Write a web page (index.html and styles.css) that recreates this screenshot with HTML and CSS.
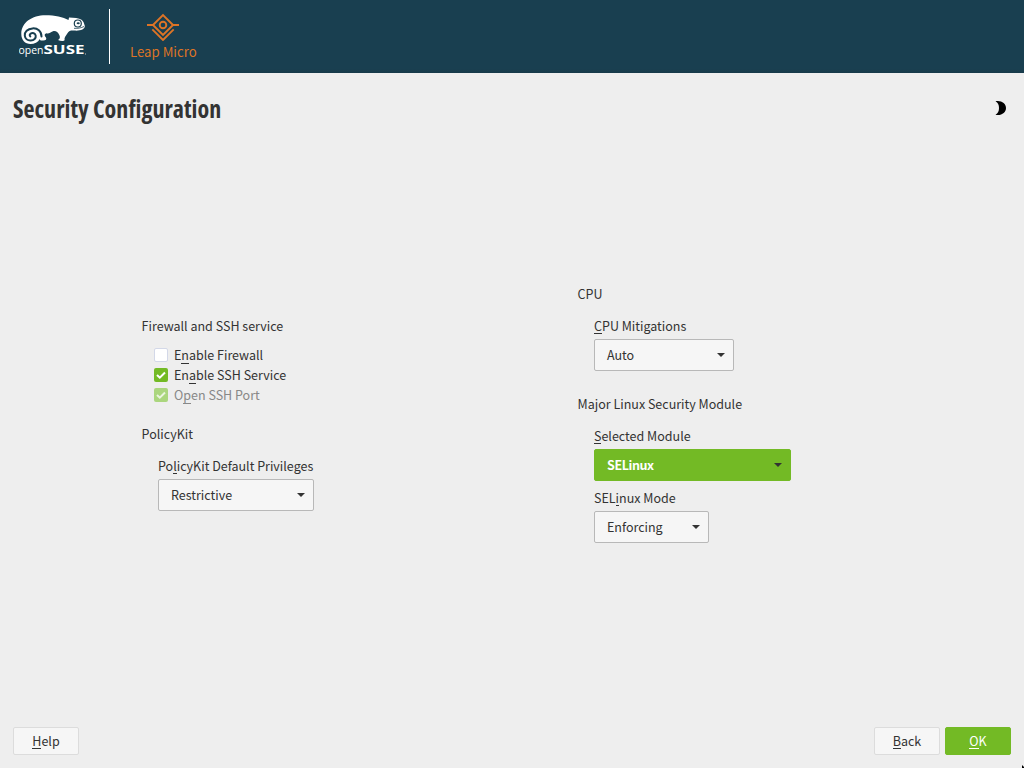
FILE: index.html
```html
<!DOCTYPE html>
<html lang="en">
<head>
<meta charset="utf-8">
<title>Security Configuration</title>
<link rel="stylesheet" href="styles.css">
</head>
<body>
<header class="banner">
  <svg class="logo" width="72" height="46" viewBox="0 0 72 46">
    <path fill="#fff" d="M11.500 32C6 32 2.300 28 2.300 22C2.300 10.500 13 3.300 26.500 3.300C36 3.300 44 5.300 49.500 8L50 5.500C55 5.500 60 6.200 62.500 7.800C64.500 9 65 11.500 65.800 14C66 17.500 61 19 55.500 18.600C52 18.400 50 18.600 48.300 21.500C46.800 24 45 25.500 45.600 28C45 29.500 41.500 29.200 39 28C40.500 27 41.500 26 40.500 23.500C39.500 20.500 37 18.500 34 19.200C31 20.600 30 22 27.500 21.300C25.500 22 25 23.300 27 25.500C28 27.500 26.500 28.800 23.500 28.500C21 28.800 21 27.600 20.800 27C19 30.500 15.500 32 11.500 32Z"/>
    <path fill="none" stroke="#193f50" stroke-width="2" stroke-linecap="round" d="M22.500 24.500C22.500 19 18.500 16 13.500 16.400C8.500 16.800 5.500 20.100 5.800 23.600C6.100 26.700 8.500 28.700 11.800 28.500C15 28.300 17.200 26.200 16.700 23.600C16.200 21.300 13.700 20.400 11.700 21.600C10.600 22.300 10.300 23.700 11.300 24.400"/>
    <path fill="none" stroke="#193f50" stroke-width=".8" d="M55 16.300C59 16.600 62 16 65 14.500"/>
    <circle cx="58.800" cy="11.500" r="3.500" fill="#fff" stroke="#193f50" stroke-width="1.200"/>
    <ellipse cx="59.200" cy="11.200" rx="1.600" ry="1" fill="#193f50"/>
    <text class="logo-open" x="-.5" y="42.300" textLength="25" lengthAdjust="spacingAndGlyphs">open</text>
    <text class="logo-suse" x="24.500" y="42.300" textLength="41" lengthAdjust="spacingAndGlyphs">SUSE</text>
    <rect x="66" y="41.500" width="1" height="1" fill="#bcc7cc"/>
  </svg>
  <div class="product">
    <svg width="32" height="28" viewBox="0 0 32 28" fill="none" stroke="#dd7426" stroke-width="1.900">
      <path d="M0 12H6L16 2L26 12H32M6 12L16 22L26 12"/>
      <path d="M5.300 16.300L16 27L26.700 16.300"/>
      <circle cx="16" cy="12" r="3.300"/>
    </svg>
    <div class="product-name"><span>Leap Micro</span></div>
  </div>
</header>
<main class="page">
  <div class="heading">
    <h1>Security Configuration</h1>
    <svg class="moon" width="12" height="16" viewBox="0 0 12 16"><path d="M.5 1.300C6.500 .3 11 3.500 11 8C11 12.700 6.500 15.900 .5 14.800C3 13.500 4 11 4 8C4 5 3 2.700 .5 1.300Z"/></svg>
  </div>
  <div class="columns">
    <section class="left">
      <div class="row">Firewall and SSH service</div>
      <div class="checks">
        <label class="check"><i class="box"></i>E<u>n</u>able Firewall</label>
        <label class="check"><i class="box on"><svg width="14" height="14"><path d="M3 7L5.800 9.700L11 4.500"/></svg></i>En<u>a</u>ble SSH Service</label>
        <label class="check disabled"><i class="box on"><svg width="14" height="14"><path d="M3 7L5.800 9.700L11 4.500"/></svg></i>O<u>p</u>en SSH Port</label>
      </div>
      <div class="row policy">PolicyKit</div>
      <div class="field">
        <div class="row">Po<u>l</u>icyKit Default Privileges</div>
        <div class="select w156">Restrictive<i class="arrow"></i></div>
      </div>
    </section>
    <section class="right">
      <div class="row">CPU</div>
      <div class="field">
        <div class="row"><u>C</u>PU Mitigations</div>
        <div class="select w140">Auto<i class="arrow"></i></div>
      </div>
      <div class="row module">Major Linux Security Module</div>
      <div class="field">
        <div class="row"><u>S</u>elected Module</div>
        <div class="select focus w197">SELinux<i class="arrow"></i></div>
        <div class="row mode">SEL<u>i</u>nux Mode</div>
        <div class="select w115">Enforcing<i class="arrow"></i></div>
      </div>
    </section>
  </div>
  <footer class="buttons">
    <div class="button"><span><u>H</u>elp</span></div>
    <div class="button back"><span><u>B</u>ack</span></div>
    <div class="button primary"><span><u>O</u>K</span></div>
  </footer>
</main>
<svg class="pointer" width="3" height="3"><path d="M1 0L3 2V3H1Z"/></svg>
</body>
</html>
```
FILE: styles.css
```css
* { box-sizing: border-box; }
body {
  margin: 0;
  width: 1024px;
  height: 768px;
  overflow: hidden;
  display: flex;
  flex-direction: column;
  background: #eee;
  color: #333;
  font: 12.500px/20px "Noto Sans CJK SC", "Noto Sans", sans-serif;
}
.banner {
  height: 73px;
  flex: none;
  display: flex;
  padding: 9px 0 0 19px;
  background: linear-gradient(#193f50 69px, #173a4a 73px);
}
.logo { display: block; margin-top: 3px; }
.logo text { fill: #fff; font-family: "Open Sans", sans-serif; }
.logo .logo-open { font-size: 11.500px; font-weight: 500; }
.logo .logo-suse { font-size: 13px; font-weight: 700; }
.product {
  height: 55px;
  margin-left: 18px;
  padding: 4px 0 0 20px;
  border-left: 1px solid #fff;
  color: #dd7426;
  display: flex;
  flex-direction: column;
  align-items: center;
}
.product-name { margin-top: 1px; font-size: 13.200px; line-height: 20px; }
.page { flex: 1; display: flex; flex-direction: column; padding: 0 13px 13px; }
.heading {
  display: flex;
  justify-content: space-between;
  padding: 19px 4px 0 0;
  height: 54px;
}
h1 {
  margin: 0;
  font: 700 24px/34px "Open Sans", sans-serif;
  font-stretch: 75%;
  letter-spacing: .02px;
  white-space: nowrap;
}
.moon { margin-top: 8px; }
.columns { flex: 1; display: flex; padding: 157px 0 0 128.600px; }
.left { width: 436px; padding-top: 32px; }
.row { height: 20px; white-space: nowrap; }
.checks { padding: 9px 0 0 12.400px; }
.check { display: flex; height: 20px; align-items: center; white-space: nowrap; }
.box {
  width: 14px;
  height: 14px;
  margin-right: 6px;
  border: 1px solid #d3d8e8;
  border-radius: 2px;
  background: #fff;
}
.box.on { border: 0; background: #73ba25; }
.box svg { display: block; fill: none; stroke: #fff; stroke-width: 2; }
.disabled { color: #888; }
.disabled .box { background: #abd67e; }
.disabled svg { opacity: .75; }
.policy { margin-top: 19px; }
.field { padding: 12px 0 0 16.400px; }
.select {
  display: flex;
  align-items: center;
  justify-content: space-between;
  height: 32px;
  margin-top: 3px;
  padding: 0 8px 0 12px;
  border: 1px solid #b8b8b8;
  border-radius: 2px;
  background: #f6f6f6;
}
.select.focus {
  border-color: #73ba25;
  background: #73ba25;
  color: #fff;
  font-weight: 700;
  letter-spacing: -.4px;
}
.arrow { border: 4px solid transparent; border-top-color: #333; border-bottom: 0; }
.w156 { width: 156px; }
.w140 { width: 140px; }
.w197 { width: 197px; }
.w115 { width: 115px; }
.module { margin-top: 23px; }
.mode { margin-top: 7px; }
u { position: relative; text-decoration: none; }
u::after {
  content: "";
  position: absolute;
  left: 0;
  right: 0;
  bottom: 1px;
  height: 1px;
  background: currentColor;
}
.buttons { display: flex; gap: 5px; }
.button {
  width: 66px;
  height: 28px;
  line-height: 26px;
  text-align: center;
  border: 1px solid #dcdcdc;
  border-radius: 2px;
  background: #f6f6f6;
}
.back { margin-left: auto; }
.primary { border-color: #73ba25; background: #73ba25; color: #fff; }
.pointer { position: absolute; right: 0; bottom: 0; }
```
